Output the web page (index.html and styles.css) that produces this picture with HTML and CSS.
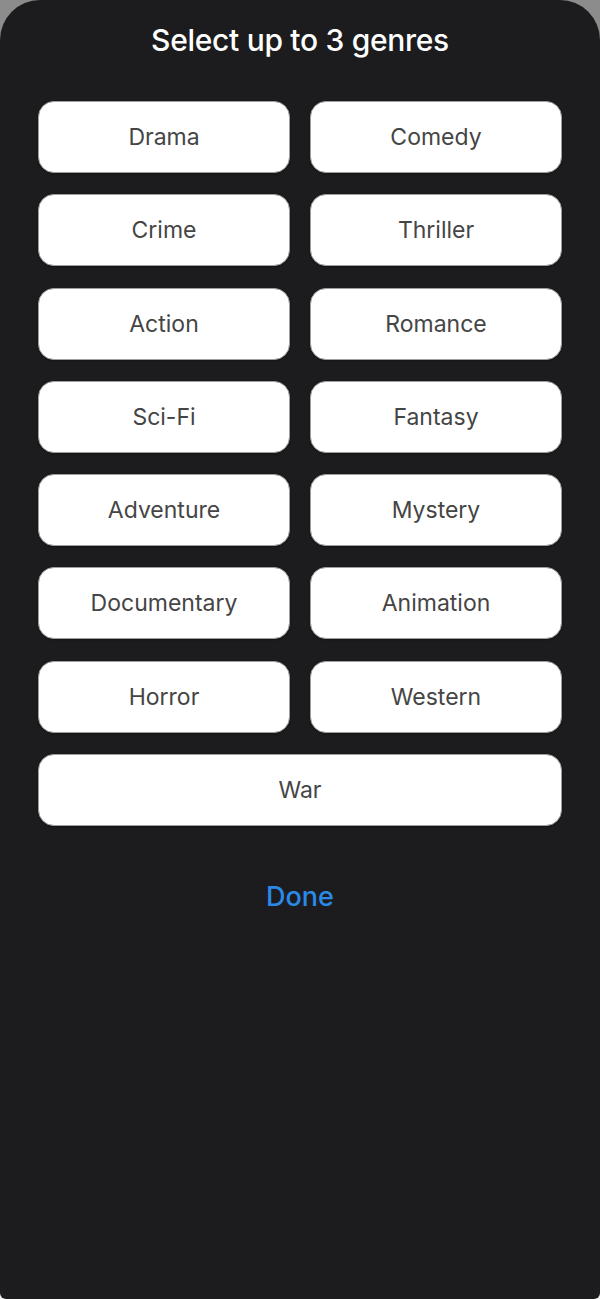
FILE: index.html
```html
<!DOCTYPE html>
<html lang="en">
<head>
    <meta charset="UTF-8">
    <title>Select genres</title>
    <link rel="stylesheet" href="styles.css">
</head>
<body>
    <div class="sheet">
        <h1 class="title">Select up to 3 genres</h1>

        <div class="genres">
            <button class="genre">Drama</button>
            <button class="genre">Comedy</button>
            <button class="genre">Crime</button>
            <button class="genre">Thriller</button>
            <button class="genre">Action</button>
            <button class="genre">Romance</button>
            <button class="genre">Sci-Fi</button>
            <button class="genre">Fantasy</button>
            <button class="genre">Adventure</button>
            <button class="genre">Mystery</button>
            <button class="genre">Documentary</button>
            <button class="genre">Animation</button>
            <button class="genre">Horror</button>
            <button class="genre">Western</button>
            <button class="genre wide">War</button>
        </div>

        <button class="done">Done</button>
    </div>
</body>
</html>
```

FILE: styles.css
```css
html {
    background: linear-gradient(#8c8c8c 0, #8c8c8c 60px, #f2f2f2 60px);
}
html, body {
    margin: 0;
    height: 100%;
}
body {
    font-family: 'Inter', 'Roboto', sans-serif;
}
.sheet {
    box-sizing: border-box;
    height: 1299px;
    background-color: #1c1c1e;
    border-radius: 40px 40px 6px 6px;
    padding: 22px 38px 0;
}
.title {
    margin: 0;
    text-align: center;
    color: #fff;
    font-size: 30px;
    font-weight: 500;
    line-height: 36px;
    letter-spacing: -0.3px;
}
.genres {
    margin-top: 43px;
    display: grid;
    grid-template-columns: 1fr 1fr;
    column-gap: 20px;
    row-gap: 21.3px;
}
.genre {
    height: 72px;
    border: 1.5px solid #9e9e9e;
    border-radius: 16px;
    background-color: #fff;
    color: #454545;
    font-family: inherit;
    font-size: 23px;
    box-shadow: 0 1px 2px rgba(0, 0, 0, 0.3);
    cursor: pointer;
}
.genre.wide {
    grid-column: 1 / span 2;
}
.done {
    display: block;
    margin: 50px auto 0;
    border: none;
    background: none;
    color: #2a8ae8;
    font-family: inherit;
    font-size: 27px;
    font-weight: 500;
    line-height: 40px;
    cursor: pointer;
}
```
